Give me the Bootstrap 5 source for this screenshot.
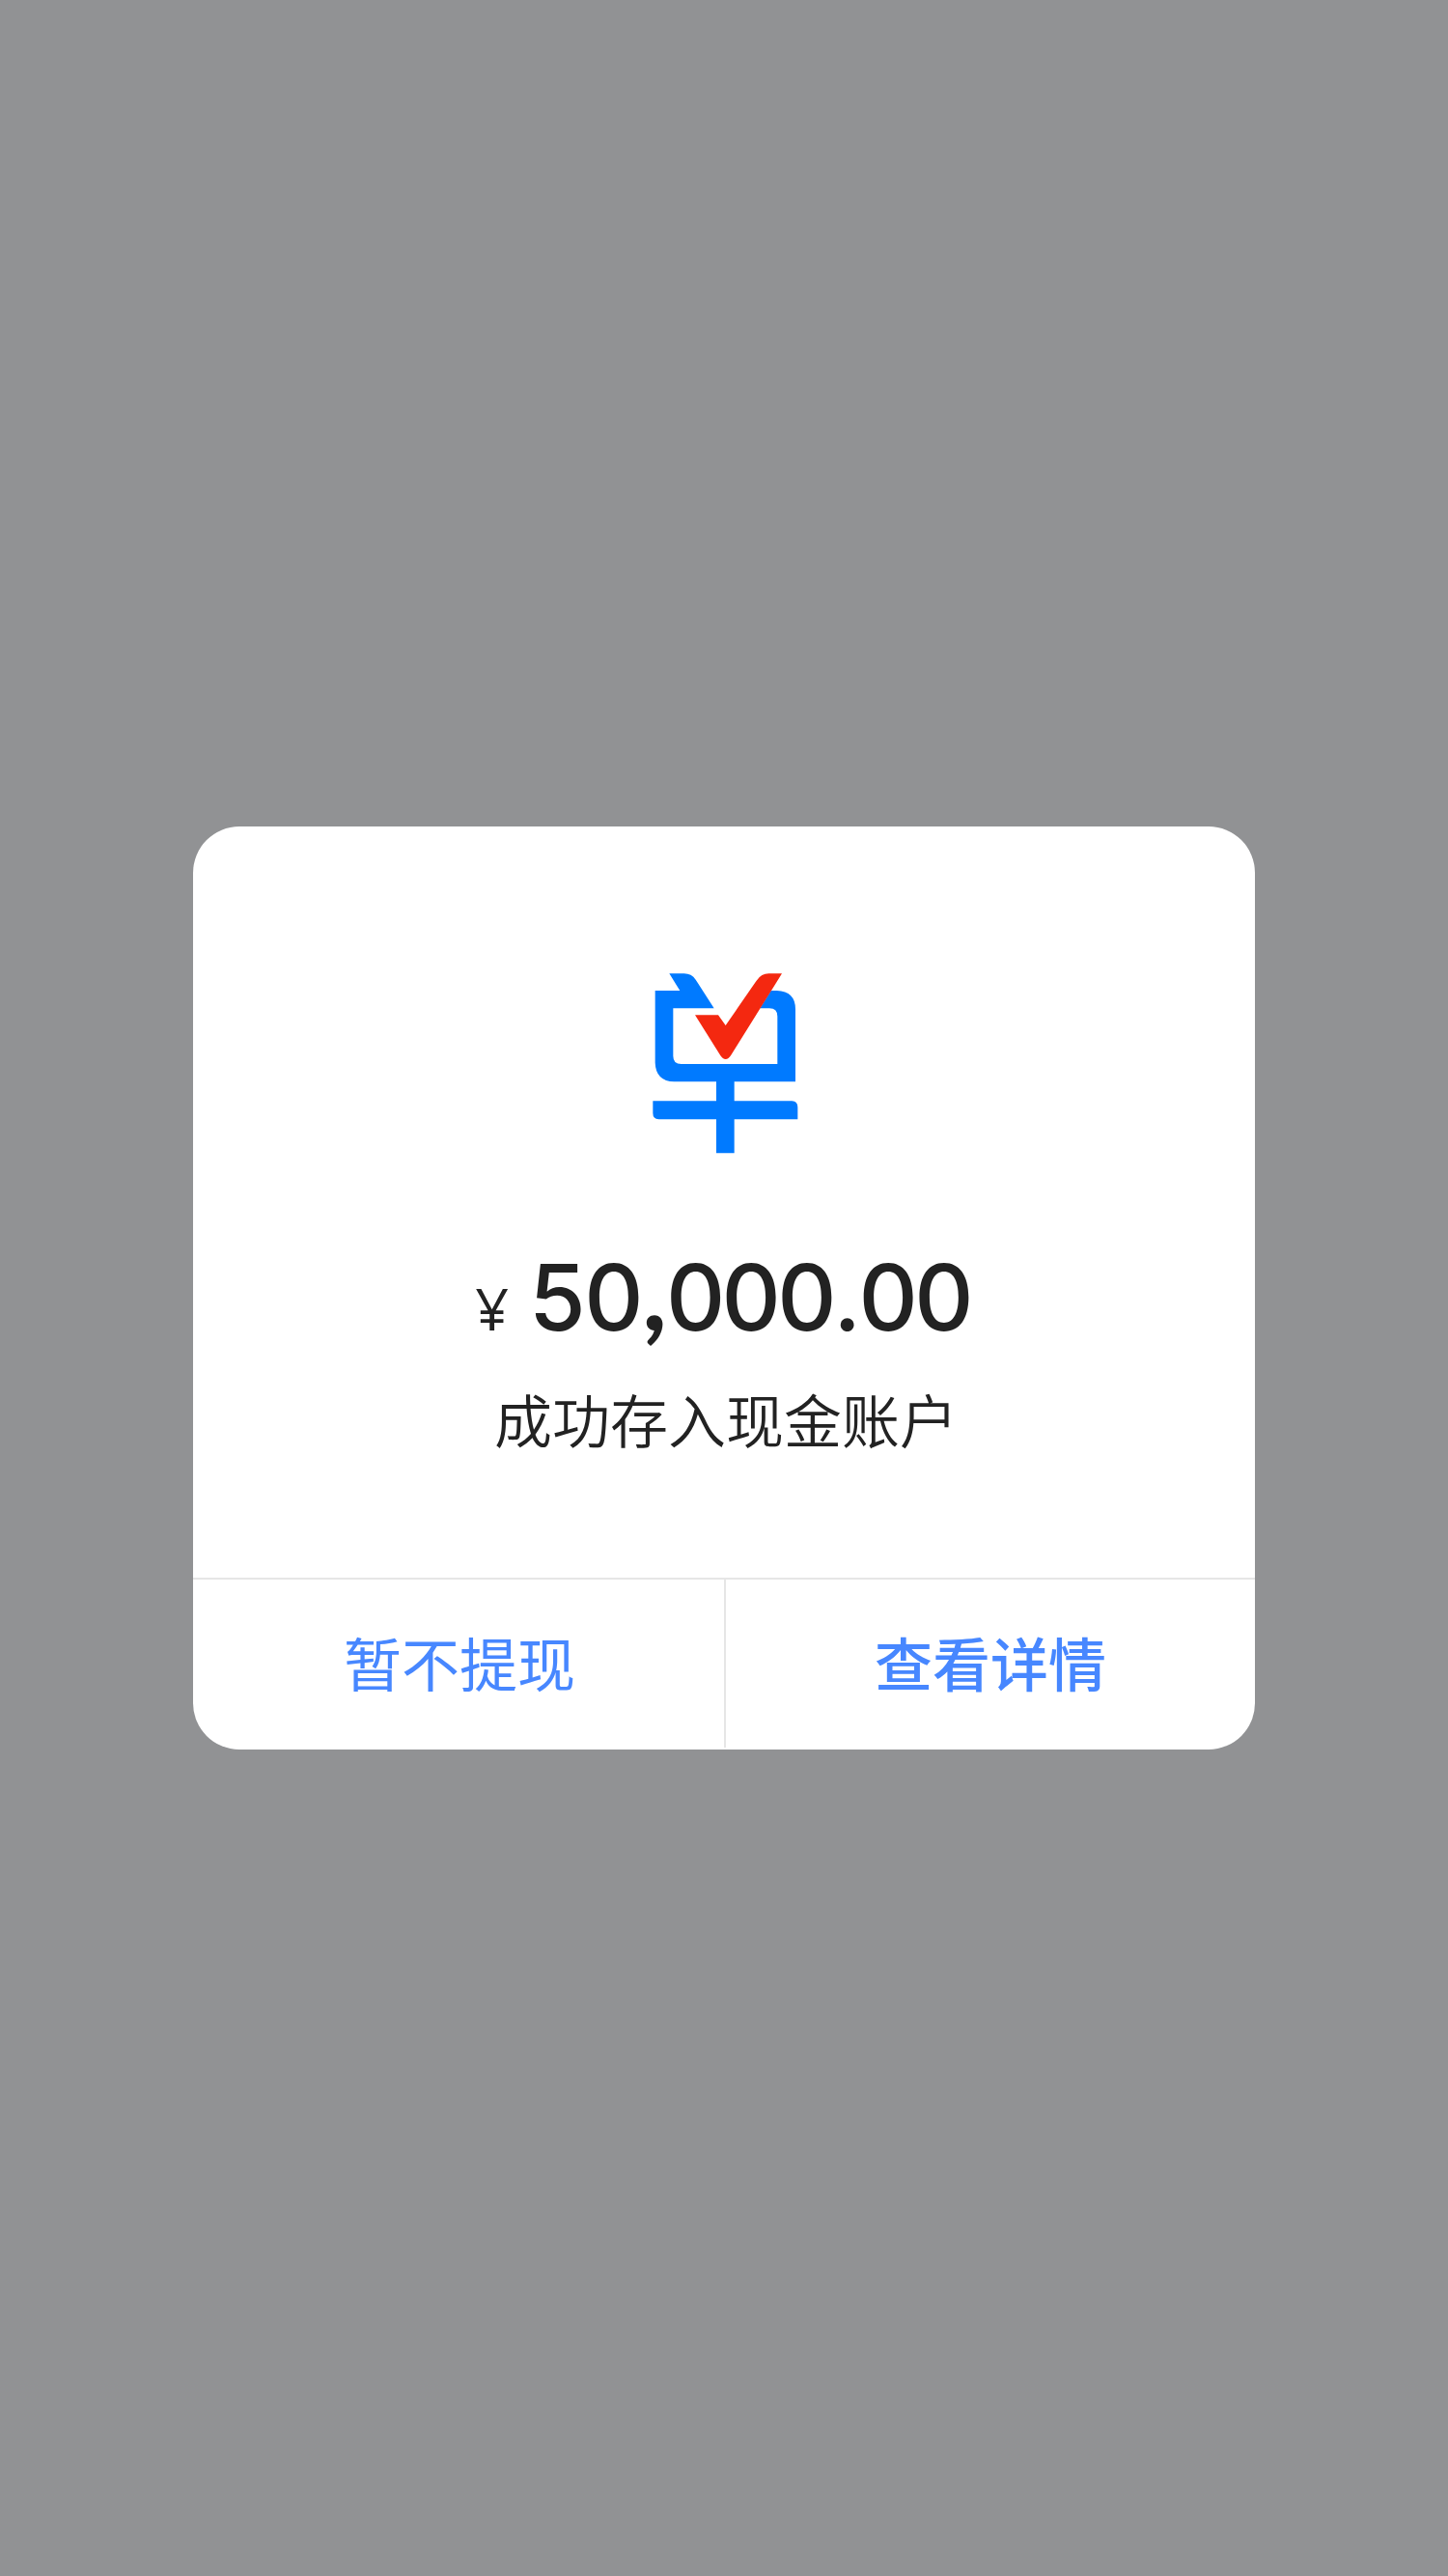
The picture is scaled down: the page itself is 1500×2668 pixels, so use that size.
<!DOCTYPE html>
<html lang="zh-CN">
<head>
<meta charset="utf-8">
<meta name="viewport" content="width=device-width, initial-scale=1">
<title>存入现金账户</title>
<link href="https://cdn.jsdelivr.net/npm/bootstrap@5.3.0/dist/css/bootstrap.min.css" rel="stylesheet">
<style>
body { background: #919294; color: #222; font-family: "Noto Sans CJK SC", sans-serif; }
.dialog-box { --bs-card-border-width: 0; --bs-card-border-radius: 48px; --bs-card-bg: #fff; --bs-card-color: #222; width: 1100px; height: 956px; }
.dialog-main { height: 778px; padding-top: 151.67px; }
.brand-mark { width: 152px; height: 188px; margin-left: 3px; }
.amount-line { height: 104px; margin-top: 96.5px; margin-right: 3px; line-height: 104px; }
.amount-sign { font-family: "Open Sans", "Noto Sans CJK SC", sans-serif; font-size: 61px; font-weight: 400; margin-right: 21px; }
.amount-value { font-family: Inter, sans-serif; font-size: 95px; font-weight: 500; letter-spacing: -3.7px; }
.amount-lead { letter-spacing: -1.5px; }
.amount-point { letter-spacing: -2.6px; margin-left: .5px; }
.amount-comma { display: inline-block; width: 27px; padding-left: 2px; font-family: Lato, sans-serif; font-size: 112px; font-weight: 700; letter-spacing: 0; line-height: 80px; }
.status-text { font-size: 60px; line-height: 88px; margin-top: 28.83px; margin-left: 4px; font-weight: 350; }
.dialog-actions { height: 178px; border-top: 2px solid #e6e6e6; }
.dialog-actions .btn { --bs-btn-color: #4787ff; --bs-btn-border-width: 0; --bs-btn-font-size: 60px; --bs-btn-line-height: 88px; --bs-btn-font-weight: 400; --bs-btn-padding-y: 0; padding-bottom: 7px; flex: 1 1 0; }
.dialog-actions .btn-detail { --bs-btn-font-weight: 500; }
.dialog-actions .btn-later { flex: 0 0 550px; padding-left: 14px; }
.action-rule { width: 2px; height: 174px; background: #e6e6e6; }
</style>
</head>
<body>
<main class="min-vh-100 d-flex align-items-center justify-content-center">
  <section class="card dialog-box overflow-hidden">
    <div class="dialog-main d-flex flex-column align-items-center">
      <svg class="brand-mark" viewBox="47 53 456 564" aria-hidden="true">
        <path fill="#007aff" fill-rule="evenodd" d="M99 54H145Q168 54 181 73L238 162H111V310Q111 335 136 335H435V187Q435 162 410 162H381L415 107H433Q491 109 491 165V390H301V450H480Q498 451 498 469V507H301V612H245V507H66Q48 506 48 488V450H245V390H114Q57 388 55 331V107H132Z"/>
        <path fill="#f42810" d="M179 183H251L274 215L370 76Q385 54 408 54H449L290 309Q283 320 274 320Q265 320 258 309Z"/>
      </svg>
      <div class="amount-line d-flex align-items-baseline">
        <span class="amount-sign">¥</span>
        <span class="amount-value"><span class="amount-lead">5</span>0<span class="amount-comma">,</span>000<span class="amount-point">.</span>00</span>
      </div>
      <div class="status-text">成功存入现金账户</div>
    </div>
    <div class="dialog-actions d-flex">
      <button type="button" class="btn btn-later rounded-0">暂不提现</button>
      <div class="action-rule flex-shrink-0"></div>
      <button type="button" class="btn btn-detail rounded-0">查看详情</button>
    </div>
  </section>
</main>
<script src="https://cdn.jsdelivr.net/npm/bootstrap@5.3.0/dist/js/bootstrap.bundle.min.js"></script>
</body>
</html>
